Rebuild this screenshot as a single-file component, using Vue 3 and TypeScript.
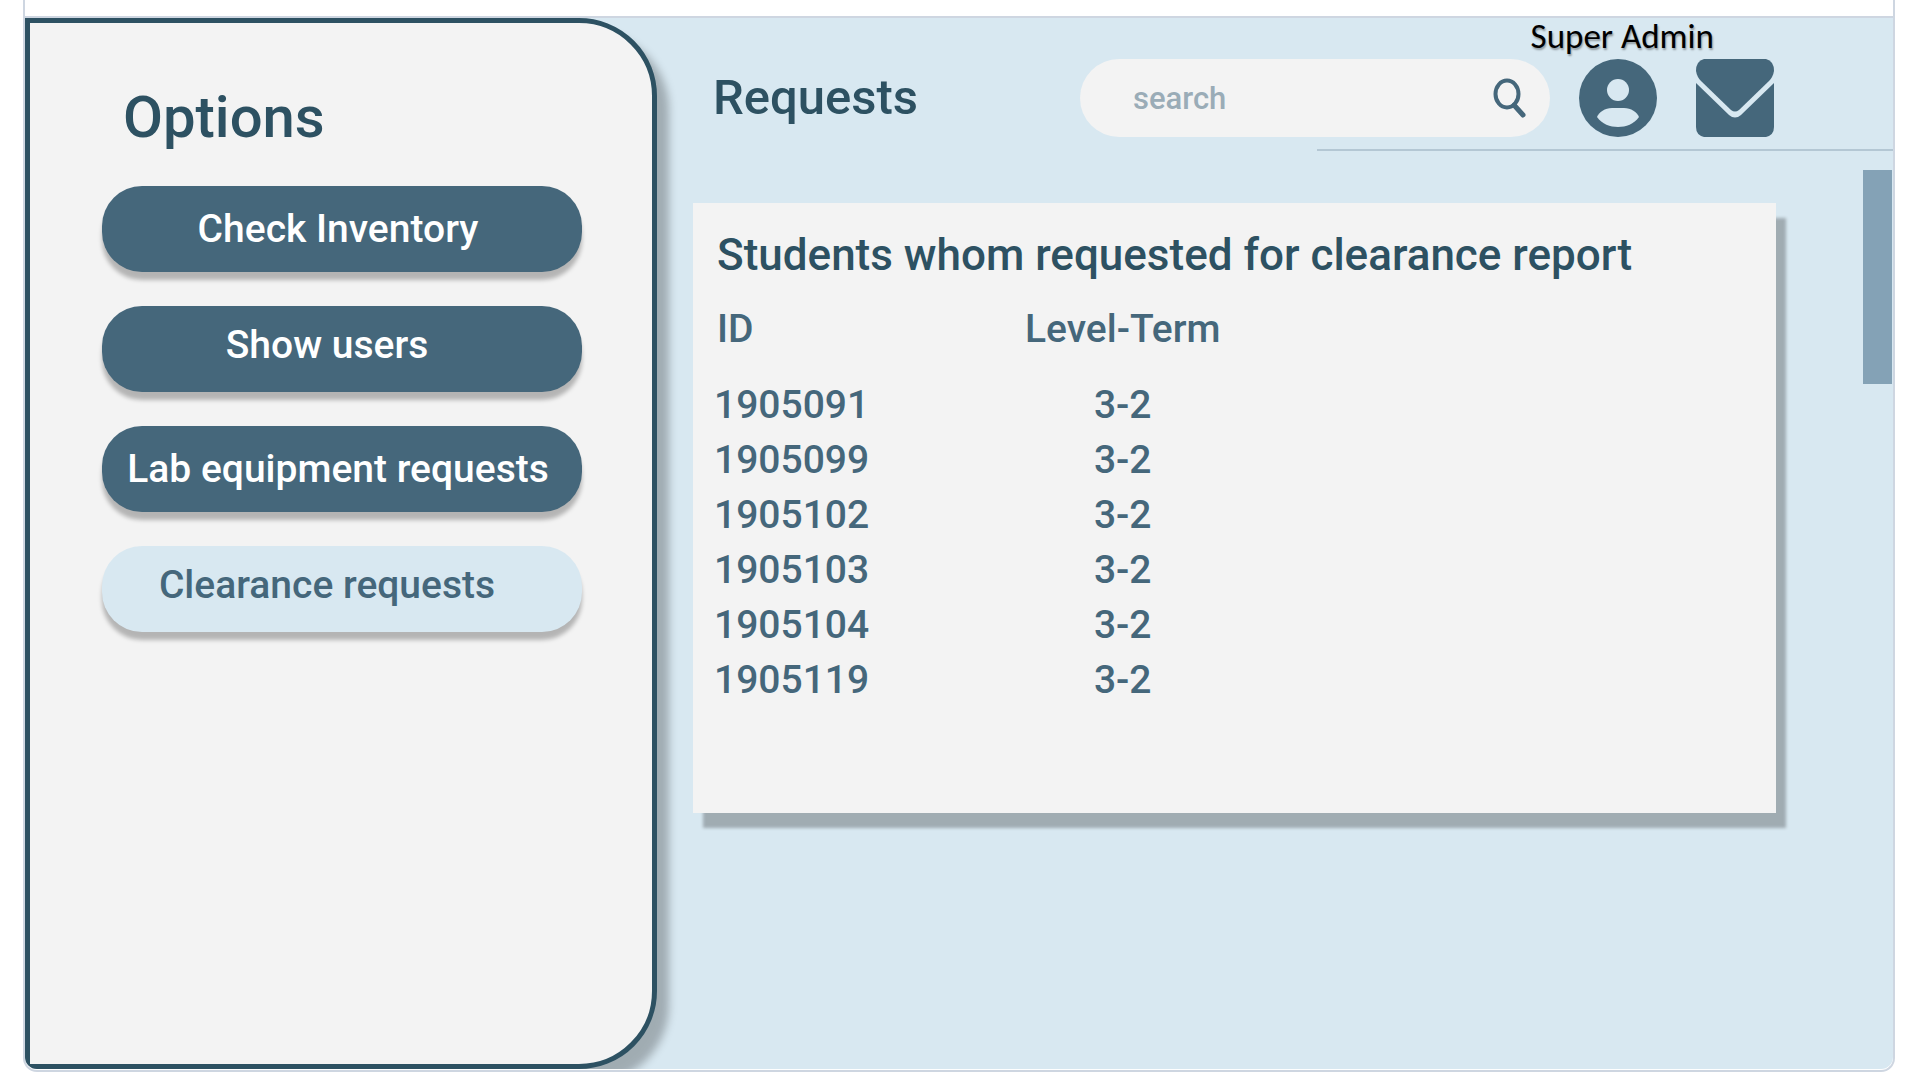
<script setup lang="ts">
import { ref } from 'vue'

interface Option {
  label: string
  compact: boolean
}

interface ClearanceRequest {
  id: string
  levelTerm: string
}

const options: Option[] = [
  { label: 'Check Inventory', compact: false },
  { label: 'Show users', compact: true },
  { label: 'Lab equipment requests', compact: false },
  { label: 'Clearance requests', compact: true },
]

const active = ref('Clearance requests')
const query = ref('')

const requests: ClearanceRequest[] = [
  { id: '1905091', levelTerm: '3-2' },
  { id: '1905099', levelTerm: '3-2' },
  { id: '1905102', levelTerm: '3-2' },
  { id: '1905103', levelTerm: '3-2' },
  { id: '1905104', levelTerm: '3-2' },
  { id: '1905119', levelTerm: '3-2' },
]
</script>

<template>
  <div class="frame">
    <div class="panel">
      <aside class="sidebar">
        <h2 class="sidebar-title">Options</h2>
        <nav class="menu">
          <button
            v-for="option in options"
            :key="option.label"
            type="button"
            class="menu-item"
            :class="{ compact: option.compact, active: option.label === active }"
            @click="active = option.label"
          >
            {{ option.label }}
          </button>
        </nav>
      </aside>

      <main class="main">
        <div class="role">Super Admin</div>
        <header class="topbar">
          <h1 class="page-title">Requests</h1>
          <form class="search" role="search" @submit.prevent>
            <input v-model="query" type="text" placeholder="search" aria-label="search" />
            <button type="submit" class="icon-button" aria-label="Submit search">
              <svg width="36" height="42" viewBox="0 0 36 42" fill="none" stroke="#45677b">
                <ellipse cx="15" cy="17" rx="11.5" ry="13.5" stroke-width="4" />
                <path d="M22 28 L31 38" stroke-width="5" stroke-linecap="round" />
              </svg>
            </button>
          </form>
          <button type="button" class="icon-button avatar" aria-label="Account">
            <svg width="78" height="78" viewBox="0 0 78 78">
              <circle cx="39" cy="39" r="39" fill="#45677b" />
              <circle cx="39" cy="31" r="11" fill="#d8e8f1" />
              <path
                d="M18 58 C20 53 26 49 33 49 H45 C52 49 58 53 60 58 C55 65 47 68 39 68 C31 68 23 65 18 58 Z"
                fill="#d8e8f1"
              />
            </svg>
          </button>
          <button type="button" class="icon-button mail" aria-label="Messages">
            <svg width="78" height="78" viewBox="0 0 78 78">
              <path
                d="M8 0 H70 Q78 2 78 12 Q77 18 73 22 L43 51 Q39 54 35 51 L5 22 Q1 18 0 12 Q0 2 8 0 Z"
                fill="#45677b"
              />
              <path
                d="M0 24 L33 56 Q39 61 45 56 L78 24 V68 Q78 76 70 78 H8 Q0 76 0 68 Z"
                fill="#45677b"
              />
            </svg>
          </button>
        </header>
        <hr class="rule" />

        <div class="content">
          <section class="card">
            <h2 class="card-title">Students whom requested for clearance report</h2>
            <table class="requests">
              <thead>
                <tr>
                  <th scope="col" class="id">ID</th>
                  <th scope="col">Level-Term</th>
                </tr>
              </thead>
              <tbody>
                <tr v-for="request in requests" :key="request.id">
                  <td class="id">{{ request.id }}</td>
                  <td>{{ request.levelTerm }}</td>
                </tr>
              </tbody>
            </table>
          </section>
          <div class="scroll-thumb"></div>
        </div>
      </main>
    </div>
  </div>
</template>

<style>
body {
  background: #ffffff;
}
</style>

<style scoped>
.frame {
  box-sizing: border-box;
  display: flex;
  flex-direction: column;
  min-height: calc(100vh - 7px);
  margin: 0 19px 7px 23px;
  padding: 16px 0 1px;
  border: 2px solid #ced6e1;
  border-top: 0;
  border-radius: 0 0 14px 14px;
  font-family: Roboto, 'Liberation Sans', sans-serif;
  font-weight: 500;
  color: #45677b;
}

.panel {
  flex: 1;
  display: flex;
  border-top: 2px solid #ced6e1;
  border-radius: 0 0 12px 12px;
  background: #d8e8f1;
  overflow: hidden;
}

.sidebar {
  box-sizing: border-box;
  position: relative;
  flex: 0 0 632px;
  padding: 60px 70px 60px 72px;
  border: 5px solid #2d5162;
  border-radius: 0 78px 78px 0;
  background: #f3f3f3;
  box-shadow: 12px 14px 8px rgba(0, 0, 0, 0.26);
}

.sidebar-title {
  margin: 0 0 35px;
  padding-left: 21px;
  font-size: 58px;
  line-height: 68px;
  font-weight: 500;
  color: #2d5162;
}

.menu {
  display: flex;
  flex-direction: column;
  gap: 34px;
}

.menu-item {
  height: 86px;
  padding: 0 8px 0 0;
  border: 0;
  border-radius: 40px;
  background: #45677b;
  box-shadow: 0 8px 4px rgba(0, 0, 0, 0.26);
  color: #ffffff;
  font: inherit;
  font-size: 39px;
  white-space: nowrap;
  cursor: pointer;
}

.menu-item.compact {
  padding: 0 30px 8px 0;
}

.menu-item.active {
  background: #d8e8f1;
  color: #45677b;
}

.main {
  flex: 1;
  min-width: 0;
}

.role {
  height: 40px;
  padding-right: 179px;
  text-align: right;
  font-family: Carlito, Calibri, Lato, sans-serif;
  font-size: 35px;
  line-height: 36px;
  font-weight: 400;
  color: #000000;
  text-shadow: 1px 2px 2px rgba(0, 0, 0, 0.35);
}

.topbar {
  display: flex;
  align-items: center;
  height: 79px;
  padding: 0 119px 0 56px;
}

.page-title {
  flex: 1;
  margin: 0;
  font-size: 49px;
  line-height: 56px;
  font-weight: 500;
  color: #2d5162;
}

.search {
  box-sizing: border-box;
  display: flex;
  align-items: center;
  flex: 0 1 470px;
  min-width: 0;
  height: 78px;
  padding: 0 22px 0 53px;
  border-radius: 39px;
  background: #f3f3f3;
}

.search input {
  flex: 1;
  min-width: 0;
  padding: 2px 0 0;
  border: 0;
  outline: 0;
  background: transparent;
  color: #45677b;
  font: inherit;
  font-size: 31px;
}

.search input::placeholder {
  color: #9aacb7;
  opacity: 1;
}

.icon-button {
  display: block;
  flex: none;
  padding: 0;
  border: 0;
  background: none;
  cursor: pointer;
}

.icon-button svg {
  display: block;
}

.avatar {
  margin-left: 29px;
}

.mail {
  margin-left: 39px;
}

.rule {
  width: 576px;
  height: 2px;
  margin: 12px 0 0 auto;
  border: 0;
  background: #b4c7d4;
}

.content {
  display: flex;
  align-items: flex-start;
  padding: 19px 1px 60px 36px;
}

.card {
  flex: 1;
  margin: 33px 87px 0 0;
  padding: 27px 20px 105px 21px;
  background: #f3f3f3;
  box-shadow: 10px 15px 3px rgba(0, 0, 0, 0.26);
}

.card-title {
  margin: 0 0 22px;
  padding-left: 3px;
  font-size: 44px;
  line-height: 50px;
  font-weight: 500;
  color: #2d5162;
}

.requests {
  border-collapse: collapse;
  font-size: 39px;
  line-height: 55px;
}

.requests th,
.requests td {
  padding: 0;
  text-align: center;
  font-weight: 500;
}

.requests th {
  padding-bottom: 21px;
}

.requests .id {
  width: 311px;
  text-align: left;
}

.requests th.id {
  box-sizing: border-box;
  padding-left: 3px;
}

.scroll-thumb {
  flex: none;
  width: 29px;
  height: 214px;
  background: #84a2b6;
}
</style>
